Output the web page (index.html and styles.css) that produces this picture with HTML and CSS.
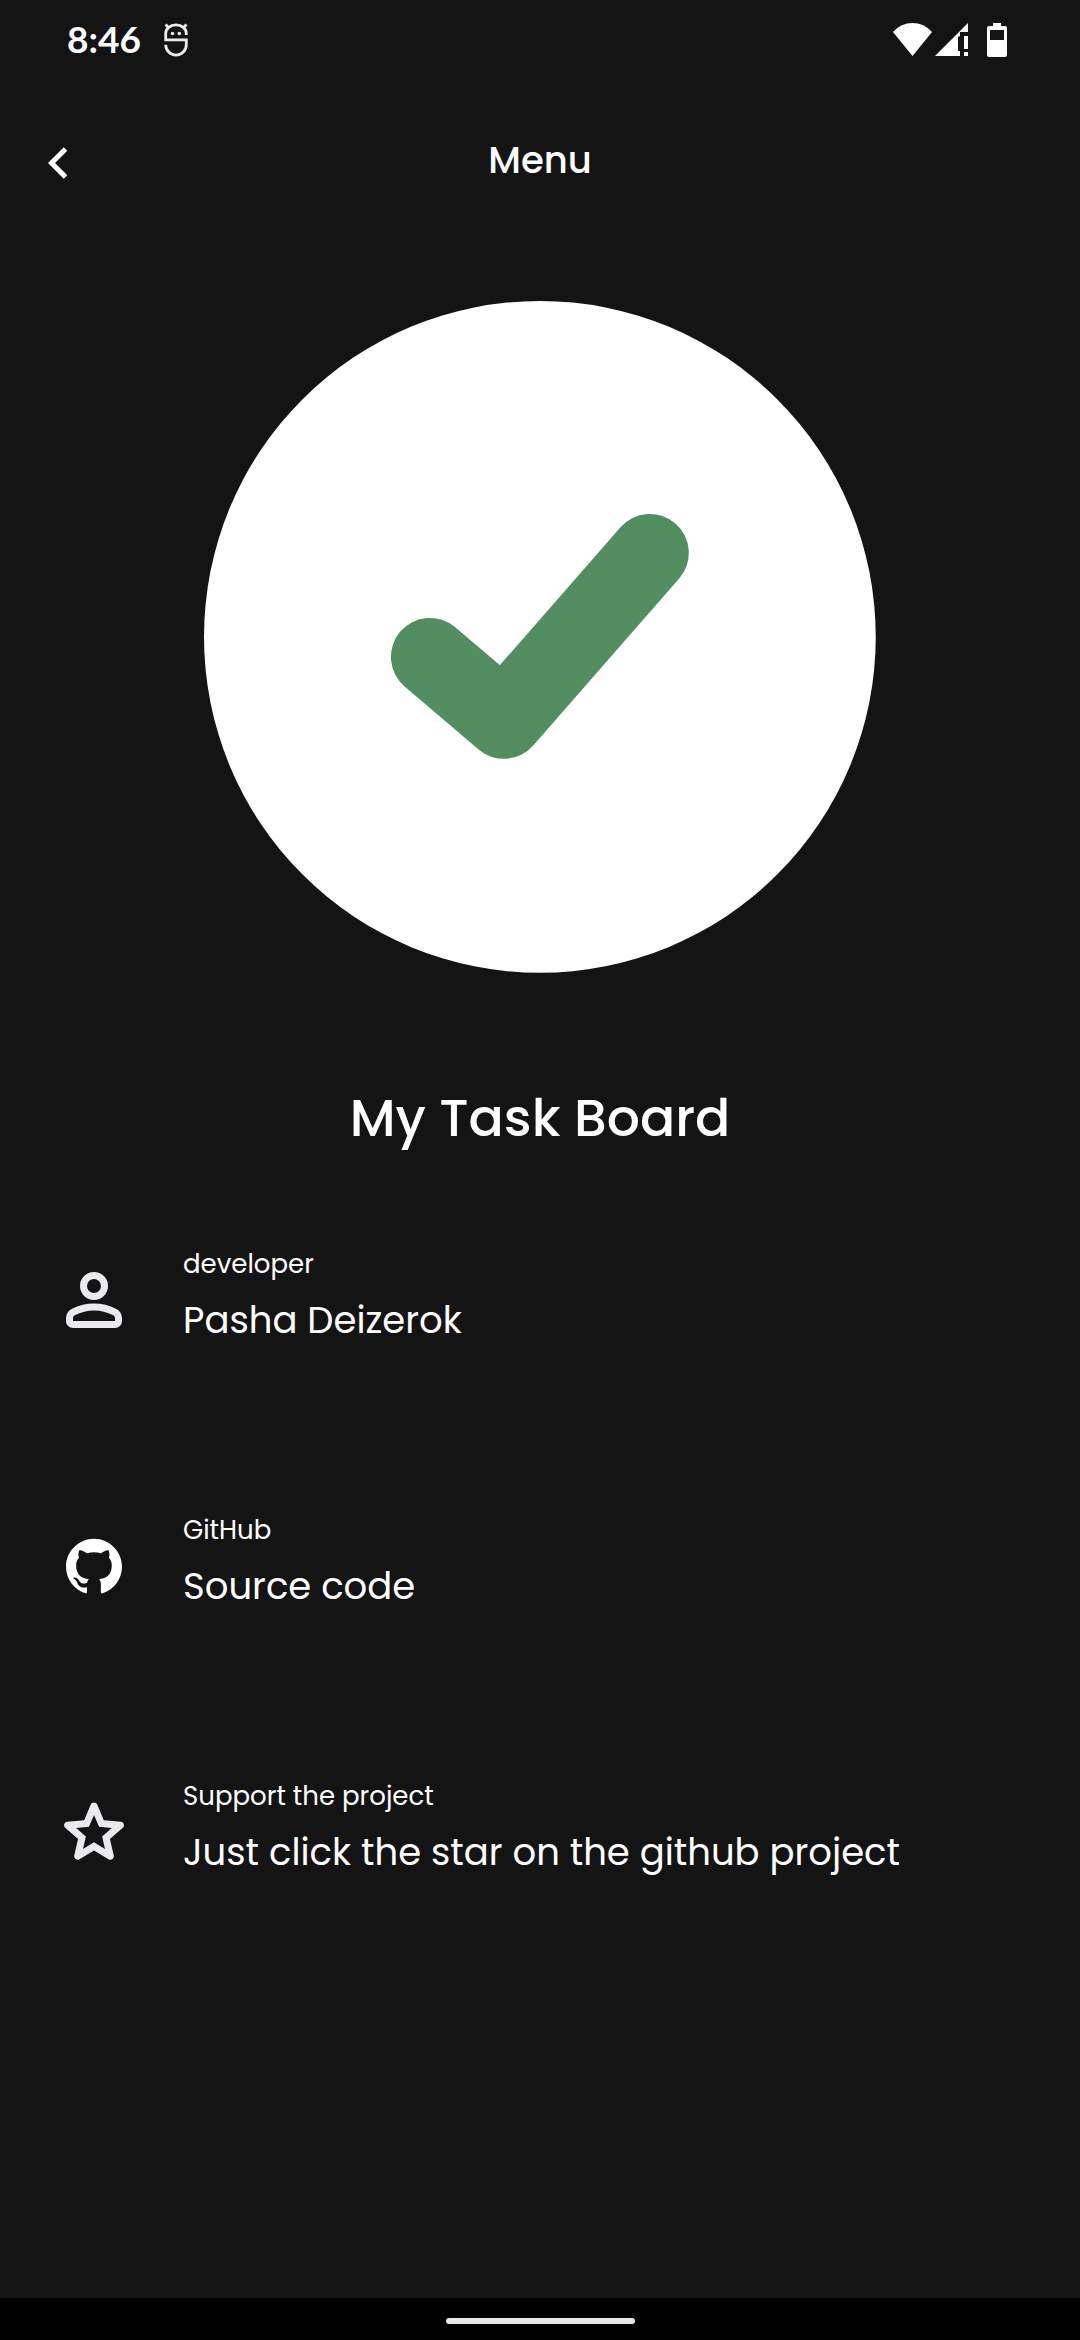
FILE: index.html
```html
<!DOCTYPE html>
<html lang="en">
<head>
<meta charset="utf-8">
<meta name="viewport" content="width=device-width, initial-scale=1">
<title>My Task Board</title>
<link rel="stylesheet" href="styles.css">
</head>
<body>
<div class="screen">
  <div class="status-bar">
    <div class="status-left">
      <span class="clock">8:46</span>
      <svg class="debug-icon" viewBox="0 0 24 34" width="24" height="34" aria-hidden="true">
        <g fill="none" stroke="#ececec" stroke-width="2.800">
          <path d="M22.300 12V10.500a10.300 8.600 0 0 0-20.600 0v6.300h20.600v5a10.300 10.300 0 0 1-20.600 0"/>
          <path d="M5 5L1.500 1.500M19 5L22.500 1.500"/>
        </g>
        <circle cx="8.500" cy="10.500" r="1.800" fill="#ececec"/>
        <circle cx="15.300" cy="10.500" r="1.800" fill="#ececec"/>
      </svg>
    </div>
    <div class="status-right">
      <svg viewBox="0 0 39 34" width="39" height="34" aria-hidden="true"><path d="M0 9Q8 0 19.500 0T39 9L19.500 33z" fill="#fff"/></svg>
      <svg viewBox="0 0 33 34" width="33" height="34" aria-hidden="true"><path d="M0 33L33 0V9H25V13L23 14V28H25V33zM29 13h4v13h-4zM29 29h4v4h-4z" fill="#fff"/></svg>
      <svg class="battery" viewBox="0 0 20 34" width="20" height="34" aria-hidden="true"><path fill-rule="evenodd" d="M6 0h8v3h4a2 2 0 0 1 2 2v27a2 2 0 0 1-2 2H2a2 2 0 0 1-2-2V5a2 2 0 0 1 2-2h4zM3 7v10h14V7z" fill="#fff"/></svg>
    </div>
  </div>

  <header class="top-bar">
    <button class="back" type="button" aria-label="Back">
      <svg viewBox="0 0 20 32" width="20" height="32" aria-hidden="true"><path d="M17.500 2L3.500 16l14 14" fill="none" stroke="#fff" stroke-width="5"/></svg>
    </button>
    <h1 class="page-title">Menu</h1>
  </header>

  <main class="content">
    <svg class="logo" viewBox="0 0 672 672" role="img" aria-label="My Task Board logo">
      <circle cx="336" cy="336" r="336" fill="#fff"/>
      <path d="M226 356L300 419L446 252" fill="none" stroke="#528e60" stroke-width="78" stroke-linecap="round" stroke-linejoin="round"/>
    </svg>
    <h2 class="app-name">My Task Board</h2>

    <nav class="links">
      <a class="row" href="#developer">
        <svg class="row-icon" viewBox="0 -960 960 960" aria-hidden="true"><path fill="#e8eaed" d="M480-480q-66 0-113-47t-47-113q0-66 47-113t113-47q66 0 113 47t47 113q0 66-47 113t-113 47ZM160-240v-32q0-34 17.500-62.500T224-378q62-31 126-46.500T480-440q66 0 130 15.500T736-378q29 15 46.500 43.500T800-272v32q0 33-23.500 56.500T720-160H240q-33 0-56.500-23.500T160-240Zm80 0h480v-32q0-11-5.500-20T700-306q-54-27-109-40.500T480-360q-56 0-111 13.500T260-306q-9 5-14.500 14t-5.500 20v32Zm240-320q33 0 56.500-23.500T560-640q0-33-23.500-56.500T480-720q-33 0-56.500 23.500T400-640q0 33 23.500 56.500T480-560Z"/></svg>
        <span class="row-text"><span class="row-label">developer</span><span class="row-value">Pasha Deizerok</span></span>
      </a>
      <a class="row" href="#source">
        <svg class="row-icon" viewBox="-6 -6 36 36" aria-hidden="true"><path fill="#fff" d="M12 .297c-6.630 0-12 5.373-12 12 0 5.303 3.438 9.800 8.205 11.385.6.113.82-.258.82-.577 0-.285-.01-1.040-.015-2.040-3.338.724-4.042-1.610-4.042-1.610C4.422 18.070 3.633 17.700 3.633 17.700c-1.087-.744.084-.729.084-.729 1.205.084 1.838 1.236 1.838 1.236 1.070 1.835 2.809 1.305 3.495.998.108-.776.417-1.305.76-1.605-2.665-.3-5.466-1.332-5.466-5.930 0-1.310.465-2.380 1.235-3.220-.135-.303-.54-1.523.105-3.176 0 0 1.005-.322 3.300 1.230.96-.267 1.980-.399 3-.405 1.020.006 2.040.138 3 .405 2.280-1.552 3.285-1.230 3.285-1.230.645 1.653.24 2.873.12 3.176.765.840 1.230 1.910 1.230 3.220 0 4.610-2.805 5.625-5.475 5.920.42.360.81 1.096.81 2.220 0 1.606-.015 2.896-.015 3.286 0 .315.210.690.825.570C20.565 22.092 24 17.592 24 12.297c0-6.627-5.373-12-12-12"/></svg>
        <span class="row-text"><span class="row-label">GitHub</span><span class="row-value">Source code</span></span>
      </a>
      <a class="row" href="#support">
        <svg class="row-icon" viewBox="0 -960 960 960" aria-hidden="true"><path fill="#e8eaed" d="m354-287 126-76 126 77-33-144 111-96-146-13-58-136-58 135-146 13 111 97-33 143Zm126 18L314-169q-11 7-23 6t-21-8q-9-7-14-17.500t-2-23.500l44-189-147-127q-10-9-12.500-20.500T140-571q4-11 12-18t22-9l194-17 75-178q5-12 15.500-18t21.500-6q11 0 21.500 6t15.500 18l75 178 194 17q14 2 22 9t12 18q4 11 1.500 22.500T809-528L662-401l44 189q3 13-2 23.500T690-171q-9 7-21 8t-23-6L480-269Z"/></svg>
        <span class="row-text"><span class="row-label">Support the project</span><span class="row-value">Just click the star on the github project</span></span>
      </a>
    </nav>
  </main>

  <div class="nav-bar"><span class="handle"></span></div>
</div>
</body>
</html>
```

FILE: styles.css
```css
* { box-sizing: border-box; }

body {
  margin: 0;
  background: #141414;
  color: #fff;
  font-family: Poppins, Inter, "Open Sans", sans-serif;
}

.screen {
  display: flex;
  flex-direction: column;
  min-height: 100vh;
}

svg { display: block; flex: none; }

.status-bar {
  display: flex;
  justify-content: space-between;
  align-items: center;
  height: 80px;
  padding: 0 73px 0 67px;
}

.status-left { display: flex; align-items: center; gap: 23px; }
.status-right { display: flex; align-items: center; gap: 3px; }
.battery { margin-left: 16px; }

.clock {
  padding-bottom: 2px;
  font-family: Lato, sans-serif;
  font-size: 37px;
  font-weight: 700;
  line-height: 40px;
}

.top-bar {
  display: grid;
  grid-template-columns: 1fr auto 1fr;
  align-items: center;
  height: 166px;
  padding: 0 32px;
}

.back {
  justify-self: start;
  padding: 16px;
  border: 0;
  background: none;
  cursor: pointer;
}

.page-title {
  margin: 0 0 6px;
  font-size: 37px;
  font-weight: 500;
  line-height: 48px;
}

.content {
  display: flex;
  flex: 1;
  flex-direction: column;
  align-items: center;
  padding-top: 55px;
}

.logo { width: 62.2%; }

.app-name {
  margin: 105px 0 9px;
  font-size: 52px;
  font-weight: 500;
  line-height: 80px;
}

.links { align-self: stretch; }

.row {
  display: flex;
  align-items: center;
  gap: 47px;
  min-height: 266px;
  padding: 0 52px;
  color: inherit;
  text-decoration: none;
}

.row-icon { width: 84px; height: 84px; }

.row-text { display: flex; flex-direction: column; gap: 6px; }
.row-label { font-size: 26px; line-height: 34px; }
.row-value { font-size: 37px; line-height: 66px; }

.nav-bar {
  display: flex;
  justify-content: center;
  align-items: center;
  height: 42px;
  padding-top: 4px;
  background: #000;
}

.handle {
  width: 189px;
  height: 6px;
  border-radius: 3px;
  background: #e8e6ea;
}
```
